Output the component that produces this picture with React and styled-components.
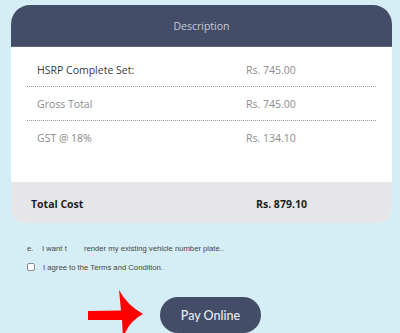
import React from "react";
import styled, { createGlobalStyle } from "styled-components";

const Global = createGlobalStyle`
  html, body { margin: 0; padding: 0; background: #d5edf4; }
  body { font-family: "Open Sans", "Noto Sans", sans-serif; }
  * { box-sizing: border-box; }
`;

const Page = styled.div`
  width: 400px;
  height: 333px;
  overflow: hidden;
  padding-top: 5px;
  background: #d5edf4;
`;

const Card = styled.div`
  margin-left: 11px;
  width: 381px;
  background: #ffffff;
  border-radius: 19px 19px 15px 15px;
  overflow: hidden;
`;

const Header = styled.div`
  height: 42px;
  background: #434d67;
  border-bottom: 1px solid #5d6680;
  display: flex;
  align-items: center;
  justify-content: center;
  color: #c9ccd8;
  font-size: 10.5px;
`;

const Body = styled.div`
  padding: 6px 16px 28px;
`;

const Row = styled.div`
  display: grid;
  grid-template-columns: 209px 1fr;
  align-items: center;
  height: ${(p) => (p.$last ? "33px" : "34px")};
  padding-left: 10px;
  border-bottom: ${(p) => (p.$last ? "none" : "1px dotted #9a9a9a")};
  font-size: 10.5px;
`;

const Label = styled.span`
  color: ${(p) => (p.$strong ? "#3b3b3b" : "#8a8a8a")};
`;

const Amount = styled.span`
  color: #8d8d8d;
`;

const Footer = styled.div`
  height: 41px;
  background: #e6e6e8;
  display: grid;
  grid-template-columns: 225px 1fr;
  align-items: center;
  padding: 3px 0 0 20px;
  font-size: 10.5px;
  font-weight: 700;
  color: #1e1e1e;
`;

const Notes = styled.div`
  margin-top: 19px;
  padding-left: 27px;
  display: flex;
  flex-direction: column;
  gap: 7px;
  font-family: "Liberation Sans", Arial, sans-serif;
  font-size: 7.7px;
  color: #474747;
`;

const NoteLine = styled.div`
  display: flex;
  align-items: center;
  height: 12px;
  gap: 8px;
`;

const Marker = styled.span`
  width: 7px;
`;

const Hidden = styled.span`
  color: transparent;
`;

const Box = styled.span`
  width: 8px;
  height: 8px;
  border: 1px solid #8a8a8a;
  border-radius: 2px;
  background: #fff;
`;

const Actions = styled.div`
  margin-top: 16px;
  padding-left: 88px;
  display: flex;
  align-items: center;
  gap: 15px;
`;

const PayButton = styled.button`
  width: 101px;
  height: 36px;
  border: none;
  border-radius: 18px;
  background: #434d67;
  color: #e9ebf1;
  font-family: "Lato", "Noto Sans", sans-serif;
  font-size: 12.5px;
  font-weight: 500;
  cursor: pointer;
`;

const Arrow = () => (
  <svg width="57" height="52" viewBox="0 0 57 52">
    <path
      d="M0 22 L33 21.5 L31 1 Q39 16 55 25 Q41 32 35 49 L34 31 L0 31 Z"
      fill="#ff0000"
    />
  </svg>
);

const rows = [
  { label: "HSRP Complete Set:", amount: "Rs. 745.00", strong: true },
  { label: "Gross Total", amount: "Rs. 745.00" },
  { label: "GST @ 18%", amount: "Rs. 134.10", last: true },
];

export default function App() {
  return (
    <Page>
      <Global />
      <Card>
        <Header>Description</Header>
        <Body>
          {rows.map((r) => (
            <Row key={r.label} $last={r.last}>
              <Label $strong={r.strong}>{r.label}</Label>
              <Amount>{r.amount}</Amount>
            </Row>
          ))}
        </Body>
        <Footer>
          <span>Total Cost</span>
          <span>Rs. 879.10</span>
        </Footer>
      </Card>
      <Notes>
        <NoteLine>
          <Marker>e.</Marker>
          <span>
            I want t<Hidden>o sur</Hidden>render my existing vehicle number plate..
          </span>
        </NoteLine>
        <NoteLine>
          <Box />
          <span>I agree to the Terms and Condition.</span>
        </NoteLine>
      </Notes>
      <Actions>
        <Arrow />
        <PayButton>Pay Online</PayButton>
      </Actions>
    </Page>
  );
}
